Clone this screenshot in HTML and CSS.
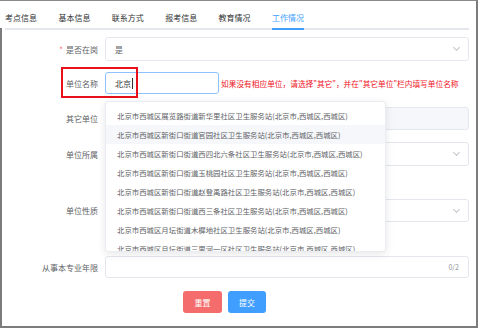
FILE: index.html
```html
<!DOCTYPE html>
<html lang="zh-CN">
<head>
    <meta charset="UTF-8">
    <title>工作情况</title>
    <link rel="stylesheet" href="styles.css">
</head>
<body>
    <div class="page">
        <div class="tabs">
            <div class="tab">考点信息</div>
            <div class="tab">基本信息</div>
            <div class="tab">联系方式</div>
            <div class="tab">报考信息</div>
            <div class="tab">教育情况</div>
            <div class="tab active">工作情况</div>
        </div>

        <div class="form">
            <div class="row row1">
                <div class="label"><span class="star">*</span>是否在岗</div>
                <div class="control select">是<span class="arrow"></span></div>
            </div>

            <div class="row row2">
                <div class="mark"></div>
                <div class="label">单位名称</div>
                <div class="name-wrap">
                    <div class="control input focus">北京<span class="caret"></span></div>
                    <ul class="dropdown">
                        <li>北京市西城区展览路街道新华里社区卫生服务站(北京市,西城区,西城区)</li>
                        <li class="hover">北京市西城区新街口街道官园社区卫生服务站(北京市,西城区,西城区)</li>
                        <li>北京市西城区新街口街道西四北六条社区卫生服务站(北京市,西城区,西城区)</li>
                        <li>北京市西城区新街口街道玉桃园社区卫生服务站(北京市,西城区,西城区)</li>
                        <li>北京市西城区新街口街道赵登禹路社区卫生服务站(北京市,西城区,西城区)</li>
                        <li>北京市西城区新街口街道西三条社区卫生服务站(北京市,西城区,西城区)</li>
                        <li>北京市西城区月坛街道木樨地社区卫生服务站(北京市,西城区,西城区)</li>
                        <li>北京市西城区月坛街道三里河一区社区卫生服务站(北京市,西城区,西城区)</li>
                    </ul>
                </div>
                <div class="hint">如果没有相应单位，请选择"其它"，并在"其它单位"栏内填写单位名称</div>
            </div>

            <div class="row row3">
                <div class="label">其它单位</div>
                <div class="control input disabled"></div>
            </div>

            <div class="row row4">
                <div class="label">单位所属</div>
                <div class="control select"><span class="arrow"></span></div>
            </div>

            <div class="row row5">
                <div class="label">单位性质</div>
                <div class="control select"><span class="arrow"></span></div>
            </div>

            <div class="row row6">
                <div class="label">从事本专业年限</div>
                <div class="control input"><span class="count">0/2</span></div>
            </div>

            <div class="buttons">
                <button class="btn reset">重置</button>
                <button class="btn submit">提交</button>
            </div>
        </div>
    </div>
</body>
</html>
```

FILE: styles.css
```css
body {
    margin: 0;
    width: 480px;
    height: 329px;
    overflow: hidden;
    background: #fff;
    font-family: "Noto Sans CJK SC", "Noto Sans", sans-serif;
    font-size: 8px;
    color: #606266;
}
.page {
    position: relative;
    box-sizing: border-box;
    width: 478px;
    height: 328px;
    border-top: 1px solid #8a8a8a;
    border-right: 2px solid #7c7c7c;
    border-bottom: 2px solid #7c7c7c;
}
.page::before {
    content: "";
    position: absolute;
    left: 0;
    top: 27px;
    bottom: 0;
    width: 2px;
    background: #7c7c7c;
}
.tabs {
    display: flex;
    margin: 0 7px 0 5px;
    border-bottom: 2px solid #e4e7ed;
}
.tab {
    height: 20px;
    padding-top: 7px;
    line-height: 20px;
    margin-right: 21.4px;
    margin-bottom: -2px;
    border-bottom: 2px solid transparent;
    color: #303133;
}
.tab.active {
    color: #409eff;
    border-bottom-color: #409eff;
}
.form {
    padding-right: 7px;
}
.row {
    position: relative;
    display: flex;
    align-items: center;
}
.row1 { margin-top: 7px; height: 24px; }
.row2 { margin-top: 11px; height: 22px; }
.row3 { margin-top: 13px; height: 23px; }
.row4 { margin-top: 12px; height: 24px; }
.row5 { margin-top: 33px; height: 23px; }
.row6 { margin-top: 34px; height: 22px; }
.label {
    width: 98px;
    margin-right: 7px;
    text-align: right;
    flex-shrink: 0;
}
.star {
    color: #f56c6c;
    margin-right: 3px;
}
.control {
    position: relative;
    box-sizing: border-box;
    flex: 1;
    height: 100%;
    border: 1px solid #e4e7ed;
    border-radius: 3px;
    padding-left: 9px;
    display: flex;
    align-items: center;
    background: #fff;
}
.arrow {
    position: absolute;
    right: 9px;
    top: 50%;
    width: 4px;
    height: 4px;
    margin-top: -4px;
    border-right: 1px solid #c0c4cc;
    border-bottom: 1px solid #c0c4cc;
    transform: rotate(45deg);
}
.name-wrap {
    position: relative;
    width: 114px;
    height: 22px;
    flex-shrink: 0;
}
.input.focus {
    border-color: #8cc2ff;
    color: #303133;
}
.caret {
    display: inline-block;
    width: 1px;
    height: 11px;
    margin-left: 1px;
    background: #303133;
}
.mark {
    position: absolute;
    left: 61px;
    top: -5px;
    width: 73px;
    height: 27px;
    border: 2px solid #e8101a;
    z-index: 2;
}
.hint {
    margin-left: 2px;
    color: #f0141e;
    font-size: 7.7px;
    white-space: nowrap;
}
.disabled {
    background: #f5f7fa;
}
.count {
    position: absolute;
    right: 9px;
    color: #909399;
    font-size: 7px;
}
.dropdown {
    position: absolute;
    left: 0;
    top: 29px;
    box-sizing: border-box;
    width: 281px;
    height: 151px;
    margin: 0;
    padding: 4px 0 0;
    list-style: none;
    overflow: hidden;
    background: #fff;
    border: 1px solid #e9ecf0;
    border-radius: 3px;
    box-shadow: 0 2px 8px rgba(0, 0, 0, 0.1);
    z-index: 3;
}
.dropdown li {
    height: 19px;
    line-height: 19px;
    padding: 0 11px;
    font-size: 7.4px;
    white-space: nowrap;
    overflow: hidden;
}
.dropdown li.hover {
    background: #f5f7fa;
}
.buttons {
    display: flex;
    gap: 6px;
    margin: 13px 0 0 183px;
}
.btn {
    height: 22px;
    border: none;
    border-radius: 3px;
    color: #fff;
    font-family: inherit;
    font-size: 8px;
    padding: 0;
}
.reset {
    width: 39px;
    background: #f56c6c;
}
.submit {
    width: 38px;
    background: #409eff;
}
```
